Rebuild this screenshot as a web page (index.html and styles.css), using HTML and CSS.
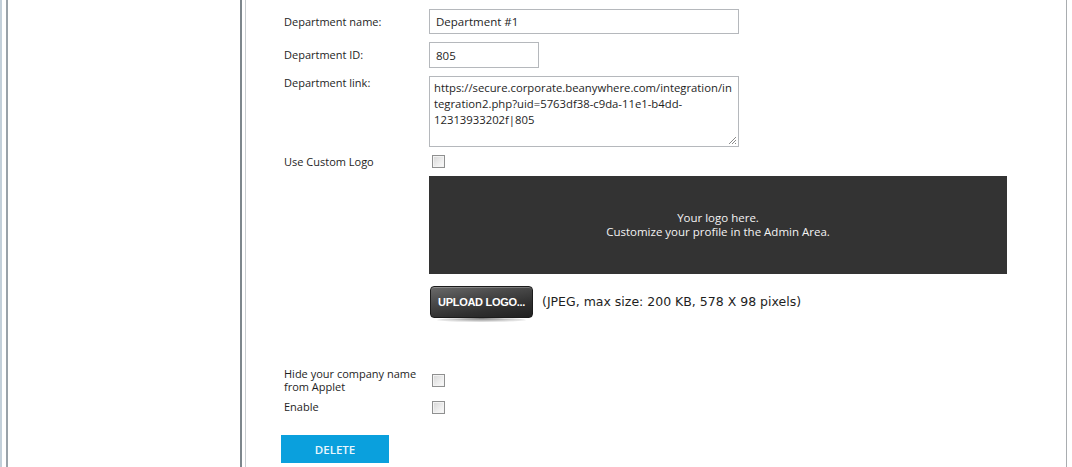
FILE: index.html
```html
<!DOCTYPE html>
<html lang="en">
<head>
<meta charset="utf-8">
<title>Department</title>
<link rel="stylesheet" href="styles.css">
</head>
<body>
<div class="page">
  <aside class="sidebar">
    <div class="sidebar-inner"></div>
  </aside>
  <main class="main">
    <form class="form">
      <label class="lbl lbl-mid">Department name:</label>
      <div class="field"><input class="text text-wide" type="text" value="Department #1"></div>

      <label class="lbl lbl-mid">Department ID:</label>
      <div class="field"><input class="text text-short" type="text" value="805"></div>

      <label class="lbl lbl-top">Department link:</label>
      <div class="field">
        <div class="textarea" role="textbox" aria-multiline="true">
          <span class="tline">https://secure.corporate.beanywhere.com/integration/in</span>
          <span class="tline">tegration2.php?uid=5763df38-c9da-11e1-b4dd-</span>
          <span class="tline">12313933202f|805</span>
          <svg class="grip" width="9" height="9" viewBox="0 0 9 9"><path d="M8 1 L1 8 M8 4 L4 8 M8 7 L7 8" stroke="#8a8a8a" stroke-width="1" fill="none"/></svg>
        </div>
      </div>

      <label class="lbl lbl-mid row-logo">Use Custom Logo</label>
      <div class="field row-logo"><input class="chk" type="checkbox"></div>

      <div class="spacer"></div>
      <div class="field">
        <div class="logo-box">
          <p>Your logo here.<br>Customize your profile in the Admin Area.</p>
        </div>
        <div class="upload-row">
          <button type="button" class="upload-btn">UPLOAD LOGO...</button>
          <span class="upload-hint">(JPEG, max size: 200 KB, 578 X 98 pixels)</span>
        </div>
      </div>

      <label class="lbl lbl-mid row-hide">Hide your company name from Applet</label>
      <div class="field row-hide chk-cell"><input class="chk" type="checkbox"></div>

      <label class="lbl lbl-mid row-enable">Enable</label>
      <div class="field row-enable chk-cell"><input class="chk" type="checkbox"></div>
    </form>
    <button type="button" class="delete-btn">DELETE</button>
  </main>
  <div class="right-edge"></div>
</div>
</body>
</html>
```

FILE: styles.css
```css
* { box-sizing: border-box; }

html, body {
  margin: 0;
  padding: 0;
  background: #ffffff;
}

body {
  font-family: "Open Sans", "Noto Sans", sans-serif;
  font-size: 11.5px;
  color: #1e1e1e;
}

.page {
  display: flex;
  height: 467px;
  overflow: hidden;
}

.sidebar {
  width: 242px;
  flex: none;
  border-left: 2px solid #c3d0da;
  padding-left: 4px;
  display: flex;
}

.sidebar-inner {
  flex: 1;
  border-left: 2px solid #99a2a9;
  border-right: 2px solid #7d868c;
  background: #ffffff;
}

.main {
  flex: none;
  width: 822px;
  margin-left: 3px;
  border-left: 1px solid #c9cdd0;
  border-right: 1px solid #a9adb0;
  padding-left: 35px;
  padding-top: 9px;
}

.right-edge {
  flex: 1;
}

.form {
  display: grid;
  grid-template-columns: 148px 1fr;
  row-gap: 8px;
  margin: 0;
}

.lbl {
  padding-left: 3px;
  font-size: 11px;
  line-height: 14px;
  display: flex;
  align-items: center;
}

.lbl-top {
  align-items: flex-start;
  padding-top: 0;
}

.field {
  display: flex;
  flex-direction: column;
  align-items: flex-start;
}

.text {
  font: inherit;
  font-size: 11.5px;
  color: #1e1e1e;
  height: 25px;
  border: 1px solid #b5b8bc;
  padding: 0 6px;
  outline: none;
  background: #fff;
}

.text-wide { width: 310px; }
.text-short { width: 110px; height: 26px; }

.textarea {
  position: relative;
  width: 310px;
  height: 71px;
  border: 1px solid #b5b8bc;
  padding: 3px 4px;
  line-height: 16px;
  font-size: 11.3px;
}

.tline {
  display: block;
  white-space: nowrap;
}

.grip {
  position: absolute;
  right: 1px;
  bottom: 1px;
}

.chk {
  appearance: none;
  -webkit-appearance: none;
  width: 13px;
  height: 13px;
  margin: 0 0 0 3px;
  border: 1px solid #8f9090;
  background: linear-gradient(135deg, #d6d6d6 0%, #eeeeee 60%, #fbfbfb 100%);
  box-shadow: inset 0 0 0 1px #f3f3f3;
}

.logo-box {
  width: 578px;
  height: 98px;
  margin-top: -1px;
  background: #333333;
  color: #f4f4f4;
  display: flex;
  align-items: center;
  justify-content: center;
  text-align: center;
}

.logo-box p {
  margin: 0;
  line-height: 14px;
  font-size: 11.5px;
}

.upload-row {
  display: flex;
  align-items: center;
  margin-top: 12px;
  margin-left: 1px;
}

.upload-btn {
  position: relative;
  width: 103px;
  height: 32px;
  border: 1px solid #1c1c1c;
  border-radius: 4px;
  background: linear-gradient(170deg, #6a6a6a 0%, #4a4a4a 35%, #2f2f2f 70%, #202020 100%);
  color: #ffffff;
  font-family: "Liberation Sans", Arial, sans-serif;
  font-weight: bold;
  font-size: 11px;
  letter-spacing: -0.3px;
  padding: 0;
  box-shadow: inset 0 1px 0 rgba(255,255,255,0.25);
}

.upload-btn::after {
  content: "";
  position: absolute;
  left: 6px;
  right: 6px;
  bottom: -5px;
  height: 4px;
  border-radius: 50%;
  background: radial-gradient(ellipse at center top, rgba(0,0,0,0.55) 0%, rgba(0,0,0,0.15) 60%, rgba(0,0,0,0) 100%);
}

.upload-hint {
  margin-left: 9px;
  font-family: "DejaVu Sans", Verdana, sans-serif;
  font-size: 12.5px;
  color: #1e1e1e;
  margin-top: -2px;
}

.row-hide.lbl {
  margin-top: 41px;
  line-height: 13px;
}

.row-hide.field {
  margin-top: 41px;
  justify-content: center;
}

.chk-cell {
  justify-content: center;
}

.row-enable.lbl { margin-top: -1px; }
.row-enable.field { margin-top: -1px; }

.delete-btn {
  margin-top: 21px;
  width: 108px;
  height: 28px;
  border: none;
  background: #0aa0dd;
  color: #eaf7fd;
  font-family: "Open Sans", "Noto Sans", sans-serif;
  font-size: 11.5px;
  font-weight: 600;
  padding: 0;
}
```
